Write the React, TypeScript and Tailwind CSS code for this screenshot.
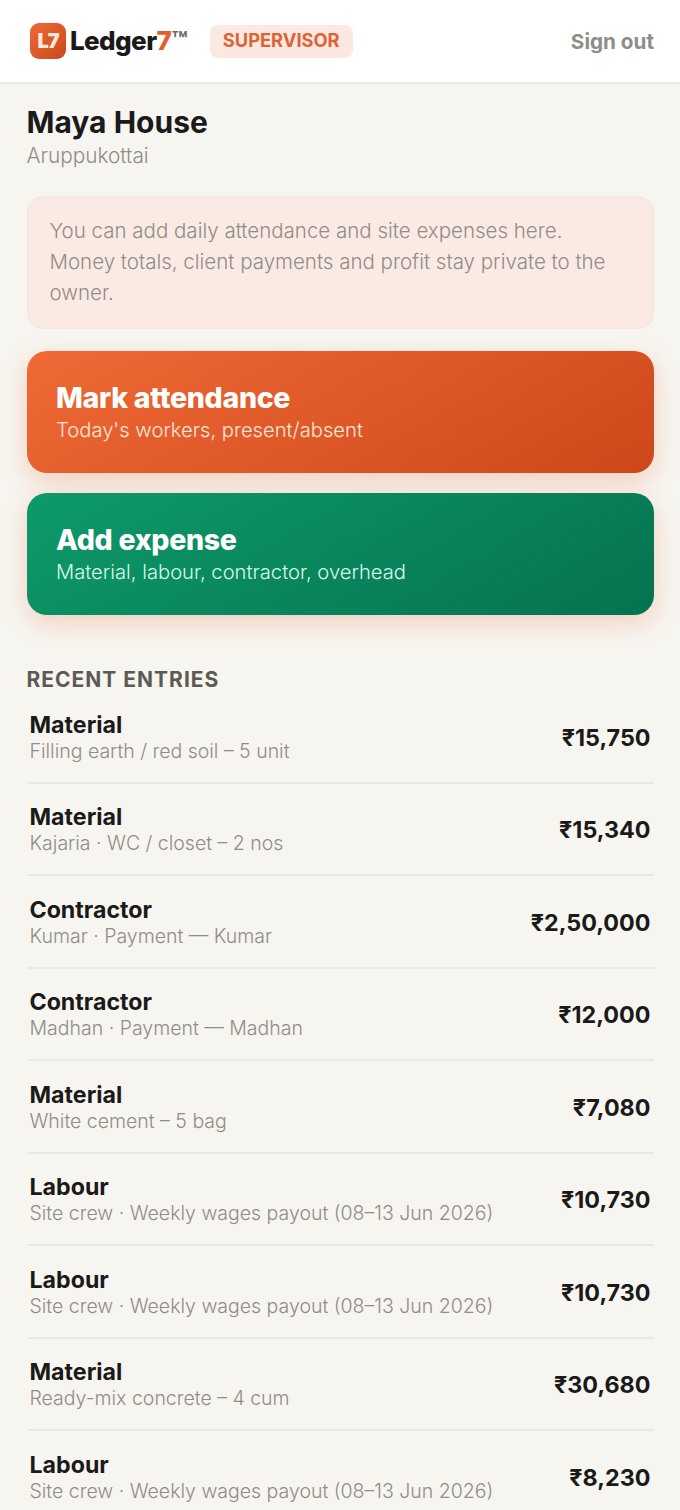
const entries = [
  { title: 'Material', detail: 'Filling earth / red soil – 5 unit', amount: '₹15,750' },
  { title: 'Material', detail: 'Kajaria · WC / closet – 2 nos', amount: '₹15,340' },
  { title: 'Contractor', detail: 'Kumar · Payment — Kumar', amount: '₹2,50,000' },
  { title: 'Contractor', detail: 'Madhan · Payment — Madhan', amount: '₹12,000' },
  { title: 'Material', detail: 'White cement – 5 bag', amount: '₹7,080' },
  { title: 'Labour', detail: 'Site crew · Weekly wages payout (08–13 Jun 2026)', amount: '₹10,730' },
  { title: 'Labour', detail: 'Site crew · Weekly wages payout (08–13 Jun 2026)', amount: '₹10,730' },
  { title: 'Material', detail: 'Ready-mix concrete – 4 cum', amount: '₹30,680' },
  { title: 'Labour', detail: 'Site crew · Weekly wages payout (08–13 Jun 2026)', amount: '₹8,230' },
];

const bodyFont = "font-['Inter',sans-serif] font-[350]";

function App() {
  return (
    <div className="h-[1510px] overflow-hidden bg-[#f7f5f0] font-['Inter',sans-serif] text-[#1a1a1a]">
      {/* Header */}
      <header className="flex h-[84px] items-center justify-between border-b-2 border-[#ebe8e1] bg-white pl-[30px] pr-[26px]">
        <div className="flex items-center">
          <div className="flex h-9 w-9 items-center justify-center rounded-[9px] bg-[linear-gradient(135deg,#f06a36,#c9481c)] text-[20px] font-black tracking-[-1px] text-[#fde8de]">
            L7
          </div>
          <div className="ml-1 flex items-start text-[26px] font-extrabold leading-none tracking-[-0.6px]">
            Ledger<span className="text-[#e2622f]">7</span>
            <span className="text-[26px] font-bold leading-none tracking-normal text-[#6b6b6b]">™</span>
          </div>
          <span className="ml-[22px] flex h-[33px] items-center rounded-lg bg-[#fbe9e1] px-[13px] text-[18.3px] font-bold text-[#df6235]">
            SUPERVISOR
          </span>
        </div>
        <span className="mt-0.5 text-[20.7px] font-bold text-[#8f8d88]">Sign out</span>
      </header>

      <main className="px-[26.5px]">
        <h1 className="mt-[18px] text-[30px] font-bold leading-[40px]">Maya House</h1>
        <p className={`${bodyFont} text-[20.8px] leading-[28px] text-[#8f8d88]`}>Aruppukottai</p>

        <div className={`${bodyFont} mt-[26px] rounded-2xl border-2 border-[#f3e8e1] bg-[#fbeae3] pb-[19px] pl-[21px] pr-[22px] pt-[17px] text-[20.5px] leading-[31px] text-[#8f8d88]`}>
          You can add daily attendance and site expenses here. Money totals, client payments and profit stay private to the owner.
        </div>

        <button className="mt-[22px] block h-[122px] w-full rounded-[20px] bg-[linear-gradient(150deg,#f06a37,#cd471a)] pl-[29.5px] pr-[30px] pt-0.5 text-left text-white shadow-[0_8px_24px_rgba(226,98,47,0.25)]">
          <div className="text-[28.5px] font-extrabold leading-[34px] tracking-[-0.3px]">Mark attendance</div>
          <div className={`${bodyFont} text-[20.2px] leading-[30px] text-[#fde6da]`}>Today's workers, present/absent</div>
        </button>

        <button className="mt-5 block h-[122px] w-full rounded-[20px] bg-[linear-gradient(150deg,#0e9a6b,#05724f)] pl-[29.5px] pr-[30px] pt-0.5 text-left text-white shadow-[0_8px_24px_rgba(226,98,47,0.25)]">
          <div className="text-[28.5px] font-extrabold leading-[34px] tracking-[-0.3px]">Add expense</div>
          <div className={`${bodyFont} text-[20.2px] leading-[30px] text-[#d8f7ea]`}>Material, labour, contractor, overhead</div>
        </button>

        <h2 className="mt-[53px] text-[21px] font-bold leading-[23px] tracking-[1px] text-[#5c5a55]">RECENT ENTRIES</h2>

        <ul>
          {entries.map((entry, i) => (
            <li key={i} className="flex h-[92.5px] items-start justify-between border-b-2 border-[#ebe8e1] px-[3px] pt-[18.5px] last:border-b-0">
              <div>
                <div className="text-[23.2px] font-bold leading-[30px]">{entry.title}</div>
                <div className={`${bodyFont} text-[19.5px] leading-[22px] text-[#8f8d88]`}>{entry.detail}</div>
              </div>
              <div className="mt-[13px] text-[23.3px] font-bold leading-[30px]">{entry.amount}</div>
            </li>
          ))}
        </ul>
      </main>
    </div>
  );
}

export default App;
